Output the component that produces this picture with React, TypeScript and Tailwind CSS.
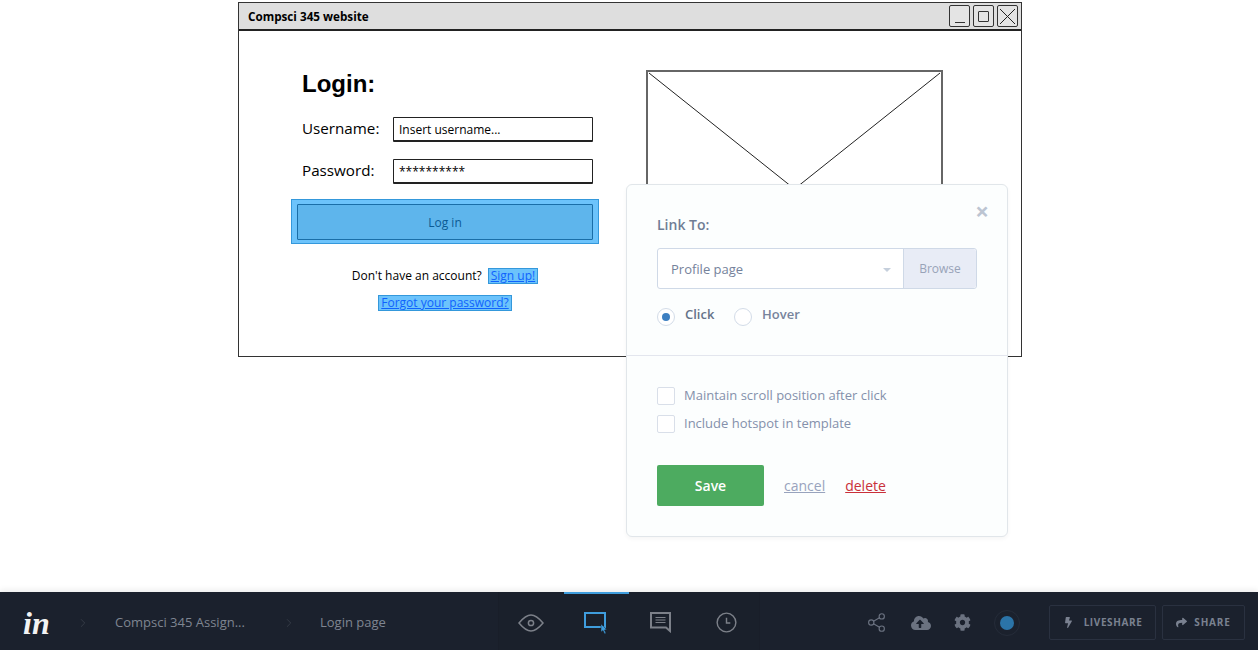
import { ChevronRight, Share2 } from "lucide-react";
import { FaBolt, FaCloudUploadAlt, FaCog, FaShare } from "react-icons/fa";

const sketch = "font-['Comic_Sans_MS','Open_Sans',sans-serif]";

function WindowButton({ children }: { children: React.ReactNode }) {
  return (
    <div className="flex h-[22px] w-[21px] items-center justify-center rounded-[2px] border border-[#333] bg-[#e4e4e4]">
      {children}
    </div>
  );
}

function SketchField({ label, value }: { label: string; value: string }) {
  return (
    <div className="flex h-[25px] items-center">
      <span className="ml-[11px] w-[91px] pb-[3px] text-[15.2px] text-black">{label}</span>
      <div className="flex h-[25px] w-[200px] items-center rounded-[1px] border border-b-2 border-[#222] pl-[5px] pt-[1px] text-[12px] text-black">
        {value}
      </div>
    </div>
  );
}

function Wireframe() {
  return (
    <div className={`ml-[238px] mt-[2px] h-[355px] w-[784px] border border-[#333] bg-white ${sketch}`}>
      <div className="flex h-[28px] items-center justify-between border-b-2 border-[#222] bg-[#dedede] pl-[9px] pr-[3px]">
        <span className="pt-[1px] text-[11.7px] font-bold text-black">Compsci 345 website</span>
        <div className="flex gap-[3px]">
          <WindowButton>
            <div className="mt-[12px] h-px w-[10px] bg-[#333]" />
          </WindowButton>
          <WindowButton>
            <div className="h-[11px] w-[11px] rounded-[1px] border border-[#333]" />
          </WindowButton>
          <WindowButton>
            <svg width="19" height="19" viewBox="0 0 19 19" stroke="#222" strokeWidth="1">
              <path d="M2 2 L17 17 M17 2 L2 17" />
            </svg>
          </WindowButton>
        </div>
      </div>
      <div className="flex">
        <div className="ml-[52px] w-[308px] pt-[37px]">
          <h1 className="ml-[11px] font-['Liberation_Sans',sans-serif] text-[24px] leading-[32px] font-bold text-black">Login:</h1>
          <div className="mt-[17px] flex flex-col gap-[17px]">
            <SketchField label="Username:" value="Insert username..." />
            <SketchField label="Password:" value="**********" />
          </div>
          <div className="mt-[15px] flex h-[45px] items-center justify-center border border-[#3498db] bg-[#6cc3fb] px-[5px]">
            <div className="flex h-[36px] w-full items-center justify-center rounded-[1px] border border-[#1a6ea8] bg-[#5eb5ec] pt-[2px] text-[12px] text-[#0b5a94]">
              Log in
            </div>
          </div>
          <div className="mt-[23px] flex h-[18px] items-center justify-center gap-[6px] text-[12px] text-black">
            <span>Don't have an account?</span>
            <span className="border border-[#3498db] bg-[#6cc3fb] px-[2px] leading-[14px] text-[#0f62fe] underline">Sign up!</span>
          </div>
          <div className="mt-[10px] flex justify-center">
            <span className="border border-[#3498db] bg-[#6cc3fb] px-[2px] text-[12px] leading-[14px] text-[#0f62fe] underline">
              Forgot your password?
            </span>
          </div>
        </div>
        <div className="ml-[47px] mt-[39px] h-[238px] w-[297px] border-2 border-[#666]">
          <svg className="h-full w-full" viewBox="0 0 293 234" preserveAspectRatio="none" stroke="#222" strokeWidth="1" fill="none">
            <path d="M1 1 L292 233 M292 1 L1 233" />
          </svg>
        </div>
      </div>
    </div>
  );
}

function HotspotPopup() {
  return (
    <div className="absolute left-[626px] top-[184px] flex h-[353px] w-[382px] flex-col rounded-[6px] border border-[#e1e6ea] bg-[#fcfefe] font-['Open_Sans',sans-serif] shadow-[0_2px_4px_rgba(0,0,0,0.04)]">
      <div className="relative h-[171px] border-b border-[#e3e6ee] pl-[30px] pr-[30px] pt-[29px]">
        <span className="absolute right-[18px] top-[14px] text-[24px] leading-[24px] font-bold text-[#bcc5d2]">×</span>
        <div className="text-[14px] leading-[22px] font-semibold text-[#6f7d95]">Link To:</div>
        <div className="mt-[12px] flex h-[41px] w-[320px] rounded-[3px] border border-[#cfd9e7] bg-white">
          <div className="flex flex-1 items-center justify-between pl-[13px] pr-[12px] pt-[2px] text-[13px] text-[#75829b]">
            <span>Profile page</span>
            <span className="h-0 w-0 border-x-[4px] border-t-[4px] border-x-transparent border-t-[#c5cfdc]" />
          </div>
          <div className="flex w-[73px] items-center justify-center rounded-r-[3px] border-l border-[#cfd9e7] bg-[#e8ecf6] text-[12px] text-[#98a3b8]">
            Browse
          </div>
        </div>
        <div className="mt-[16px] flex items-center text-[13px] font-semibold">
          <span className="flex h-[18px] w-[18px] items-center justify-center rounded-full border border-[#d3dce8] bg-white">
            <span className="h-[8px] w-[8px] rounded-full bg-[#3d7fc1]" />
          </span>
          <span className="ml-[10px] w-[49px] pb-[4px] text-[#667389]">Click</span>
          <span className="h-[18px] w-[18px] rounded-full border border-[#d3dce8] bg-white" />
          <span className="ml-[10px] pb-[4px] text-[#77849c]">Hover</span>
        </div>
      </div>
      <div className="pl-[30px] pt-[31px]">
        <div className="flex flex-col gap-[10px] text-[13px] text-[#8490ab]">
          <label className="flex h-[18px] items-center gap-[9px]">
            <span className="h-[18px] w-[18px] rounded-[2px] border border-[#d9dfe9] bg-white" />
            Maintain scroll position after click
          </label>
          <label className="flex h-[18px] items-center gap-[9px]">
            <span className="h-[18px] w-[18px] rounded-[2px] border border-[#d9dfe9] bg-white" />
            Include hotspot in template
          </label>
        </div>
        <div className="mt-[32px] flex items-center">
          <div className="flex h-[41px] w-[107px] items-center justify-center rounded-[2px] bg-[#4dab60] text-[14px] font-semibold text-white">
            Save
          </div>
          <span className="ml-[20px] text-[14px] text-[#98a3bd] underline">cancel</span>
          <span className="ml-[20px] text-[14px] text-[#c9303a] underline">delete</span>
        </div>
      </div>
    </div>
  );
}

function BottomBar() {
  return (
    <div className="flex h-[58px] items-center bg-[#1b212d] font-['Open_Sans',sans-serif] shadow-[0_-2px_6px_rgba(0,0,0,0.08)]">
      <div className="flex w-[498px] items-center pt-[3px]">
        <span className="ml-[23px] w-[30px] font-['Liberation_Serif',serif] text-[32px] leading-none font-bold italic text-[#f3f3f3]">in</span>
        <ChevronRight size={14} strokeWidth={1} className="ml-[23px] text-[#454b57]" />
        <span className="ml-[25px] w-[129px] text-[13px] whitespace-nowrap text-[#7f8591]">Compsci 345 Assign...</span>
        <ChevronRight size={14} strokeWidth={1} className="ml-[38px] text-[#454b57]" />
        <span className="ml-[24px] text-[13px] text-[#7f8591]">Login page</span>
      </div>
      <div className="relative flex h-full w-[262px] items-center border-x border-[#191e29] bg-[#1a202b] pt-[3px]">
        <div className="absolute left-[65px] top-0 h-[2px] w-[65px] bg-[#3f9ddd]" />
        <div className="flex w-[65px] justify-center pr-[2px]">
          <svg width="26" height="18" viewBox="0 0 26 18" fill="none" stroke="#7c8089" strokeWidth="1.5">
            <path d="M1 9 C6 3 9.5 1 13 1 C16.5 1 20 3 25 9 C20 15 16.5 17 13 17 C9.5 17 6 15 1 9 Z" />
            <circle cx="13" cy="9" r="2.6" />
          </svg>
        </div>
        <div className="flex w-[65px] justify-center pr-[2px]">
          <svg width="24" height="22" viewBox="0 0 24 22" fill="none">
            <rect x="1" y="1" width="20" height="14" stroke="#3f9ddd" strokeWidth="2" />
            <path d="M17 12 L17 20 L19 18.5 L20.6 22 L22 21.2 L20.5 18 L22.8 17.6 Z" fill="#3f9ddd" stroke="#1a202b" strokeWidth="0.5" />
          </svg>
        </div>
        <div className="flex w-[65px] justify-center pr-[2px]">
          <svg width="21" height="21" viewBox="0 0 21 21" fill="none" stroke="#7c8089" strokeWidth="2">
            <path d="M1 1 H20 V19 L16 15.5 H1 Z" />
            <path d="M5.5 5.5 H15.5 M5.5 8 H15.5 M5.5 10.5 H15.5" strokeWidth="1" />
          </svg>
        </div>
        <div className="flex w-[65px] justify-center">
          <svg width="21" height="21" viewBox="0 0 22 22" fill="none" stroke="#7c8089" strokeWidth="1.5">
            <circle cx="11" cy="11" r="9.8" />
            <path d="M11 6 V11.5 H15" />
          </svg>
        </div>
      </div>
      <div className="flex flex-1 items-center pl-[106px] pt-[3px]">
        <Share2 size={21} strokeWidth={1.3} className="text-[#6b7280]" />
        <FaCloudUploadAlt size={20} className="ml-[24px] text-[#6b7280]" />
        <FaCog size={17} className="ml-[23px] text-[#6b7280]" />
        <div className="ml-[23px] flex h-[26px] w-[26px] items-center justify-center rounded-full border border-[#252c39]">
          <span className="h-[14px] w-[14px] rounded-full bg-[#2b74a8]" />
        </div>
        <div className="ml-[29px] flex h-[35px] w-[107px] items-center justify-center gap-[10px] rounded-[2px] border border-[#2a3140] text-[10px] font-bold tracking-[0.06em] text-[#7a8190]">
          <FaBolt size={11} />
          LIVESHARE
        </div>
        <div className="ml-[6px] flex h-[35px] w-[83px] items-center justify-center gap-[7px] rounded-[2px] border border-[#2a3140] text-[10px] font-bold tracking-[0.08em] text-[#7a8190]">
          <FaShare size={11} />
          SHARE
        </div>
      </div>
    </div>
  );
}

export default function App() {
  return (
    <div className="relative flex h-[650px] w-[1258px] flex-col overflow-hidden bg-white">
      <div className="flex-1">
        <Wireframe />
      </div>
      <HotspotPopup />
      <BottomBar />
    </div>
  );
}
